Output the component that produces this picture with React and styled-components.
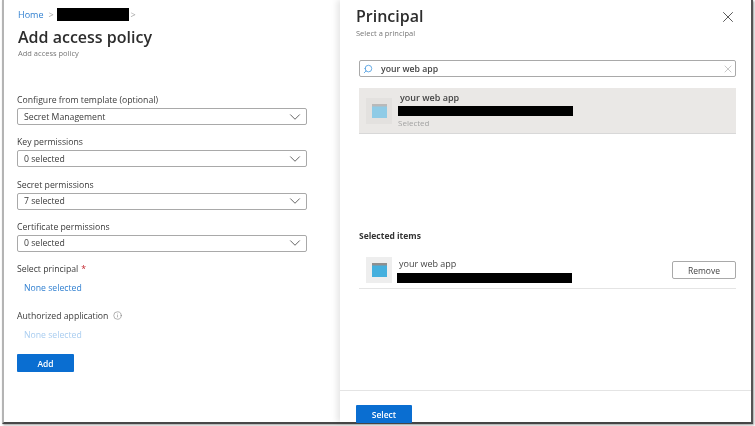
import styled, { createGlobalStyle } from "styled-components";
import { ChevronDown, Info, Search, X } from "lucide-react";

const Global = createGlobalStyle`
  html, body {
    margin: 0;
    padding: 0;
    background: #fff;
  }
  * {
    box-sizing: border-box;
  }
`;

const Frame = styled.div`
  width: 755px;
  height: 426px;
  overflow: hidden;
  background: #fff;
  font-family: "Open Sans", "Liberation Sans", sans-serif;
  filter: blur(0.35px);
`;

const Shot = styled.div`
  width: 751px;
  height: 424px;
  margin-left: 2px;
  display: flex;
  border-left: 2px solid #b4b4b4;
  border-right: 2px solid #555;
  border-bottom: 2px solid #484848;
  box-shadow: 1px 1px 2px rgba(0, 0, 0, 0.4);
`;

const PolicyPane = styled.section`
  width: 336px;
  padding: 8px 0 0 14px;
  background: #fff;
`;

const Breadcrumb = styled.div`
  display: flex;
  align-items: center;
  height: 13px;
  font-size: 9px;
  color: #8a8a8a;
`;

const Crumb = styled.span`
  color: #2f7fd0;
`;

const Sep = styled.span`
  margin: 0 ${(p) => p.$right ?? 3}px 0 ${(p) => p.$left ?? 5}px;
  color: #a6a6a6;
`;

const Redact = styled.div`
  height: ${(p) => p.$h}px;
  width: ${(p) => p.$w}px;
  margin-top: ${(p) => p.$top || 0}px;
  background: #000;
`;

const Title = styled.h1`
  margin: 5px 0 0;
  font-size: 16px;
  line-height: 22px;
  font-weight: 600;
  color: #2d2d2d;
`;

const Sub = styled.div`
  font-size: 7.5px;
  line-height: 11px;
  color: #777;
`;

const Form = styled.div`
  margin: 35px 0 0 -1px;
  width: 290px;
  display: flex;
  flex-direction: column;
`;

const Label = styled.div`
  font-size: 8.7px;
  line-height: 12px;
  color: #3a3a3a;
  display: flex;
  align-items: center;
  gap: 5px;
`;

const Req = styled.span`
  color: #c4262e;
  margin-left: -2px;
`;

const Select = styled.div`
  height: 17px;
  margin: 2px 0 11.3px;
  padding: 0 2px 0 6px;
  display: flex;
  align-items: center;
  justify-content: space-between;
  border: 1px solid #a9a9a9;
  border-radius: 2px;
  font-size: 8.7px;
  color: #3a3a3a;
  background: #fff;
`;

const Picker = styled.div`
  margin: 7px 0 ${(p) => p.$after}px 7px;
  font-size: 8.7px;
  line-height: 12px;
  color: ${(p) => (p.$muted ? "#a9cdf0" : "#2f7fd0")};
`;

const PrimaryButton = styled.button`
  width: ${(p) => p.$w}px;
  height: 18px;
  flex-shrink: 0;
  padding: 0;
  border: none;
  border-radius: 1px;
  background: #0a6ed1;
  color: #fff;
  font-family: inherit;
  font-size: 8.5px;
  font-weight: 600;
`;

const PrincipalPane = styled.section`
  flex: 1;
  display: flex;
  flex-direction: column;
  background: #fff;
  box-shadow: -3px 0 6px rgba(0, 0, 0, 0.1);
`;

const PaneBody = styled.div`
  flex: 1;
  padding: 5px 15px 0 19px;
`;

const PaneHead = styled.div`
  display: flex;
  justify-content: space-between;
`;

const PaneTitle = styled.h2`
  margin: 0 0 0 -3px;
  font-size: 16px;
  line-height: 22px;
  font-weight: 600;
  color: #2d2d2d;
`;

const Close = styled.div`
  margin: 3px -1px 0 0;
  height: 18px;
  color: #555;
`;

const PaneSub = styled.div`
  margin: 1px 0 0 -3px;
  font-size: 7.5px;
  line-height: 11px;
  color: #777;
`;

const SearchBox = styled.div`
  height: 17px;
  margin-top: 21px;
  padding: 0 1px 0 3px;
  display: flex;
  align-items: center;
  gap: 8px;
  border: 1px solid #a9a9a9;
  border-radius: 2px;
  font-size: 8.7px;
  font-weight: 600;
  color: #444;
`;

const SearchText = styled.span`
  flex: 1;
`;

const ResultRow = styled.div`
  height: 46px;
  margin-top: 11px;
  padding: 0 7px;
  display: flex;
  align-items: center;
  gap: 6px;
  background: #eae8e6;
  border-bottom: 1px solid #d8d8d8;
`;

const AppTile = styled.div`
  width: 26px;
  height: 26px;
  flex-shrink: 0;
  display: flex;
  align-items: center;
  justify-content: center;
  background: ${(p) => (p.$pale ? "#e3e1df" : "#eeeeee")};
`;

const RowText = styled.div`
  display: flex;
  flex-direction: column;
`;

const RowName = styled.div`
  font-size: 9px;
  line-height: 12px;
  font-weight: ${(p) => p.$weight};
  color: #444;
  margin-left: ${(p) => p.$indent || 0}px;
`;

const RowStatus = styled.div`
  font-size: 8px;
  line-height: 12px;
  margin-top: 1px;
  color: #a3a3a3;
`;

const SectionLabel = styled.div`
  margin-top: 96px;
  font-size: 8.5px;
  line-height: 12px;
  font-weight: 700;
  color: #333;
`;

const ItemRow = styled.div`
  height: 37px;
  margin-top: 10px;
  padding: 5px 0 5px 7px;
  display: flex;
  align-items: center;
  gap: 5px;
  border-bottom: 1px solid #e4e4e4;
`;

const RemoveButton = styled.button`
  width: 64px;
  height: 18px;
  margin-left: auto;
  padding: 0;
  border: 1px solid #a9a9a9;
  border-radius: 2px;
  background: #fff;
  color: #444;
  font-family: inherit;
  font-size: 8.5px;
`;

const PaneFooter = styled.div`
  height: 32px;
  padding: 14px 0 0 16px;
  display: flex;
  align-items: flex-start;
  border-top: 1px solid #e4e4e4;
`;

const AppIcon = ({ pale }) => (
  <svg width="15" height="14" viewBox="0 0 15 14">
    <rect width="15" height="14" fill={pale ? "#8fcbe6" : "#45b0de"} />
    <rect width="15" height="2.5" fill={pale ? "#b9b9b9" : "#8f8f8f"} />
  </svg>
);

const fields = [
  ["Configure from template (optional)", "Secret Management"],
  ["Key permissions", "0 selected"],
  ["Secret permissions", "7 selected"],
  ["Certificate permissions", "0 selected"],
];

export default function App() {
  return (
    <Frame>
      <Global />
      <Shot>
        <PolicyPane>
          <Breadcrumb>
            <Crumb>Home</Crumb>
            <Sep>&gt;</Sep>
            <Redact $w={72} $h={13} />
            <Sep $left={2} $right={0}>&gt;</Sep>
          </Breadcrumb>
          <Title>Add access policy</Title>
          <Sub>Add access policy</Sub>
          <Form>
            {fields.map(([label, value]) => (
              <div key={label}>
                <Label>{label}</Label>
                <Select>
                  {value}
                  <ChevronDown size={18} strokeWidth={1.2} color="#555" />
                </Select>
              </div>
            ))}
            <Label>
              <span>Select principal</span>
              <Req>*</Req>
            </Label>
            <Picker $after={15.7}>None selected</Picker>
            <Label>
              Authorized application
              <Info size={9} strokeWidth={1.5} color="#777" />
            </Label>
            <Picker $muted $after={13.3}>None selected</Picker>
            <PrimaryButton $w={57}>Add</PrimaryButton>
          </Form>
        </PolicyPane>
        <PrincipalPane>
          <PaneBody>
            <PaneHead>
              <PaneTitle>Principal</PaneTitle>
              <Close>
                <X size={18} strokeWidth={1.3} />
              </Close>
            </PaneHead>
            <PaneSub>Select a principal</PaneSub>
            <SearchBox>
              <Search size={10} color="#4a9be0" style={{ transform: "scaleX(-1)" }} />
              <SearchText>your web app</SearchText>
              <X size={12} color="#c8c8c8" />
            </SearchBox>
            <ResultRow>
              <AppTile $pale>
                <AppIcon pale />
              </AppTile>
              <RowText>
                <RowName $indent={2} $weight={600}>your web app</RowName>
                <Redact $w={175} $h={10} $top={2} />
                <RowStatus>Selected</RowStatus>
              </RowText>
            </ResultRow>
            <SectionLabel>Selected items</SectionLabel>
            <ItemRow>
              <AppTile>
                <AppIcon />
              </AppTile>
              <RowText>
                <RowName $indent={2} $weight={500}>your web app</RowName>
                <Redact $w={175} $h={10} $top={3} />
              </RowText>
              <RemoveButton>Remove</RemoveButton>
            </ItemRow>
          </PaneBody>
          <PaneFooter>
            <PrimaryButton $w={56}>Select</PrimaryButton>
          </PaneFooter>
        </PrincipalPane>
      </Shot>
    </Frame>
  );
}
